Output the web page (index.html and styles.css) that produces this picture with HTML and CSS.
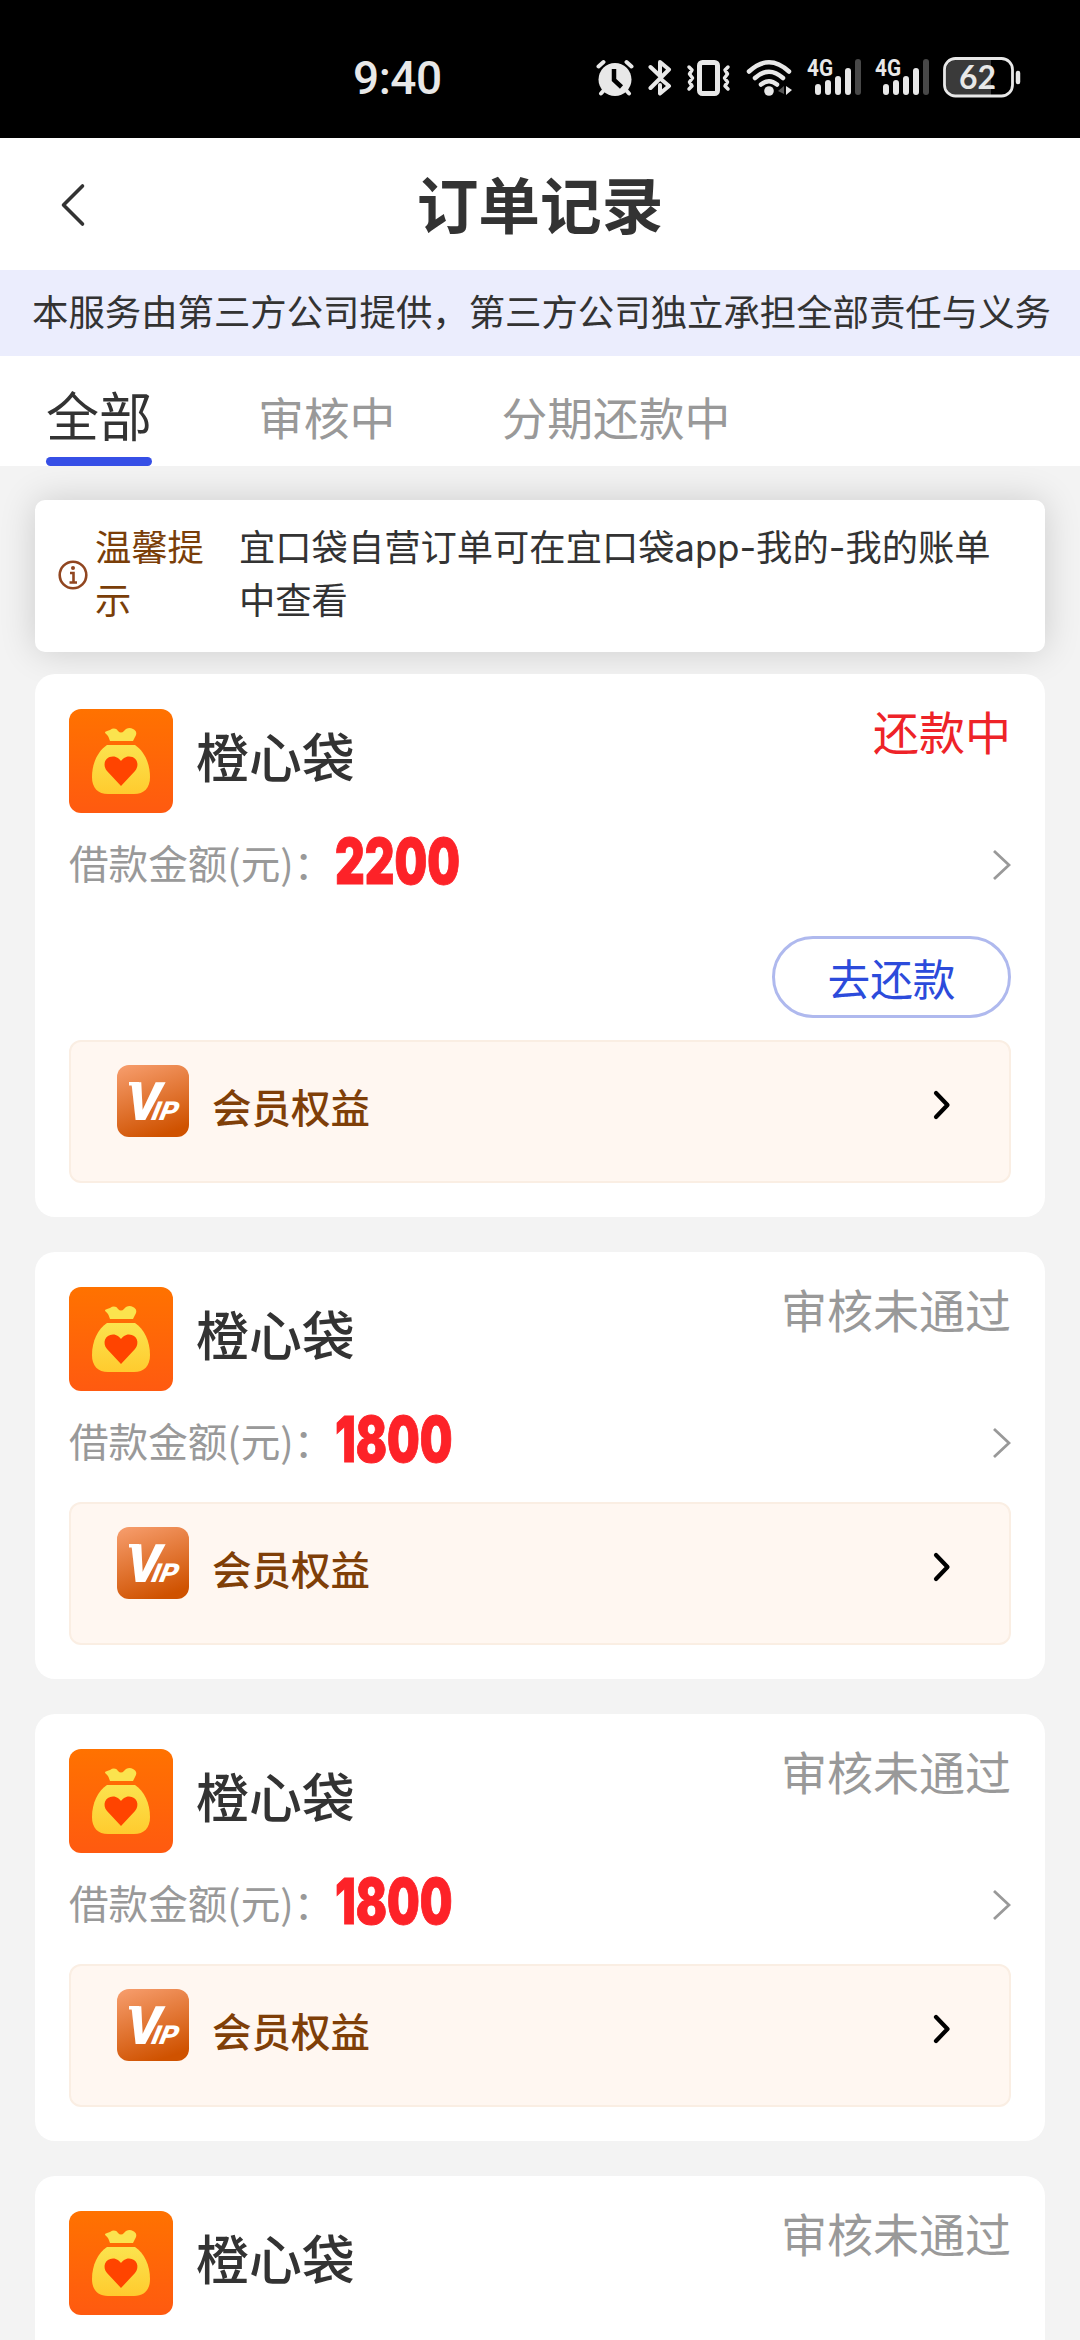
FILE: index.html
```html
<!DOCTYPE html>
<html lang="zh-CN">
<head>
<meta charset="utf-8">
<title>订单记录</title>
<link rel="stylesheet" href="styles.css">
</head>
<body>
<svg class="defs" width="0" height="0" aria-hidden="true">
  <defs>
    <linearGradient id="orange" x1="0" y1="0" x2="0" y2="1"><stop offset="0" stop-color="#ff7200"/><stop offset="1" stop-color="#ff5a10"/></linearGradient>
    <linearGradient id="gold" x1="0" y1="0" x2="0" y2="1"><stop offset="0" stop-color="#fbe34e"/><stop offset="1" stop-color="#ffcb2e"/></linearGradient>
    <linearGradient id="copper" x1="0.2" y1="0" x2="0.55" y2="1"><stop offset="0" stop-color="#f59a68"/><stop offset="1" stop-color="#cf5200"/></linearGradient>
    <symbol id="bag" viewBox="0 0 104 104">
      <rect width="104" height="104" rx="12" fill="url(#orange)"/>
      <path d="M36 23c1 -1 3 -1 5 -2c3 -2 6 -2 8 1c2 2 4 2 6 0c2 -3 6 -4 9 -2c4 2 4 5 2 8l-2 4H41l-1.500 -4c-1 -2.500 -3.500 -3 -3.500 -5z" fill="#fbe34e"/>
      <path d="M38 36H66C75 42 81 54 81 68C81 79 75 85 65 85H39C29 85 23 79 23 68C23 54 29 42 38 36Z" fill="url(#gold)"/>
      <path d="M52 77L38 62C33 56 36 47.500 44 47.500C48 47.500 50.500 50 52 52C53.500 50 56 47.500 60 47.500C68 47.500 71 56 66 62Z" fill="#ff4400"/>
    </symbol>
    <symbol id="vip" viewBox="0 0 72 72">
      <rect width="72" height="72" rx="12" fill="url(#copper)"/>
      <path d="M12 17H22V20.500H12Z" fill="#fff"/>
      <text class="vip-v" transform="translate(6.500 55) skewX(-12)" textLength="34" lengthAdjust="spacingAndGlyphs">V</text>
      <text class="vip-ip" transform="translate(32 55) skewX(-22)" textLength="26" lengthAdjust="spacingAndGlyphs">IP</text>
    </symbol>
    <symbol id="signal" viewBox="0 0 54 40">
      <text class="net" x="0" y="18" textLength="26" lengthAdjust="spacingAndGlyphs">4G</text>
      <path d="M11 29V34M21 25V34M31 21V34M41 13V34" stroke="#e8e8e8" stroke-width="6" stroke-linecap="round"/>
      <path d="M51 4V34" stroke="#484848" stroke-width="6" stroke-linecap="round"/>
    </symbol>
  </defs>
</svg>

<header class="status-bar">
  <span class="clock">9:40</span>
  <div class="status-icons">
    <svg class="i-alarm" viewBox="0 0 38 40" width="38" height="40"><circle cx="19" cy="21.500" r="16.500" fill="#e8e8e8"/><path d="M2.500 8.500L7.500 4M35.500 8.500L30.500 4M5 35.500L9 31M33 35.500L29 31" stroke="#e8e8e8" stroke-width="4" stroke-linecap="round"/><path d="M18 11V22L25.500 29" fill="none" stroke="#000" stroke-width="4.500"/></svg>
    <svg class="i-bt" viewBox="0 0 24 40" width="24" height="40"><path d="M2.500 9L12 18V4L21 11.500L2.500 30M14 22L21 28L12 35.500V27" fill="none" stroke="#e8e8e8" stroke-width="4" stroke-linecap="round" stroke-linejoin="round"/></svg>
    <svg class="i-vib" viewBox="0 0 46 40" width="46" height="40"><rect x="13.500" y="4.500" width="18" height="31" rx="3" fill="none" stroke="#e8e8e8" stroke-width="5"/><path d="M3 9L6 12L3.500 16L6.500 20L3.500 24L6 28L3 31M42 9L39 12L41.500 16L38.500 20L41.500 24L39 28L42 31" fill="none" stroke="#e8e8e8" stroke-width="3.500" stroke-linecap="round" stroke-linejoin="round"/></svg>
    <svg class="i-wifi" viewBox="0 0 48 40" width="48" height="40"><path d="M3 13.500Q23 -5 43 13.500M9 20Q23 7.500 37 20M15 26.500Q23 20 31 26.500" fill="none" stroke="#e8e8e8" stroke-width="4.500" stroke-linecap="round"/><circle cx="23" cy="33" r="4.800" fill="#e8e8e8"/><path d="M38 28V36L32 33Z" fill="#555"/><path d="M40 28L46 32L40 37Z" fill="#e8e8e8"/></svg>
    <svg class="i-sig" width="54" height="40"><use href="#signal"/></svg>
    <svg class="i-sig2" width="54" height="40"><use href="#signal"/></svg>
    <svg class="i-bat" viewBox="0 0 80 42" width="80" height="42"><path d="M13 3H48V38H13A10 10 0 0 1 3 28V13A10 10 0 0 1 13 3Z" fill="#3a3a3a"/><rect x="1.500" y="1.500" width="68" height="37.500" rx="11" fill="none" stroke="#e8e8e8" stroke-width="2.800"/><path d="M75 16V25" stroke="#e8e8e8" stroke-width="4.500" stroke-linecap="round"/><text class="bat-num" x="16" y="32" textLength="37" lengthAdjust="spacingAndGlyphs">62</text></svg>
  </div>
</header>

<nav class="nav-bar">
  <svg class="back" viewBox="0 0 30 48" width="30" height="48"><path d="M23.500 5L4.500 24L23.500 43" fill="none" stroke="#333" stroke-width="3.600" stroke-linecap="round" stroke-linejoin="round"/></svg>
  <h1 class="title">订单记录</h1>
</nav>
<p class="notice">本服务由第三方公司提供，第三方公司独立承担全部责任与义务</p>
<div class="tabs">
  <span class="tab active">全部</span>
  <span class="tab">审核中</span>
  <span class="tab">分期还款中</span>
</div>

<main class="list">
  <section class="tip">
    <svg class="info" viewBox="0 0 30 30" width="30" height="30"><circle cx="15" cy="15" r="13.300" fill="none" stroke="#914620" stroke-width="2.600"/><circle cx="15" cy="8" r="2" fill="#914620"/><path d="M12 13H15.500V22M11.500 22.500H19" fill="none" stroke="#914620" stroke-width="2.600"/></svg>
    <span class="tip-label">温馨提示</span>
    <p class="tip-text">宜口袋自营订单可在宜口袋app-我的-我的账单中查看</p>
  </section>

  <article class="card">
    <div class="head"><svg class="logo"><use href="#bag"/></svg><h2 class="name">橙心袋</h2><span class="state repaying">还款中</span></div>
    <div class="amount-row"><span class="label">借款金额(元)：</span><span class="amount">2200</span><svg class="more" viewBox="0 0 20 32" width="20" height="32"><path d="M3 2L18 16L3 30" fill="none" stroke="#999" stroke-width="2.800"/></svg></div>
    <div class="actions"><button class="repay">去还款</button></div>
    <div class="benefit"><svg class="vip"><use href="#vip"/></svg><span class="benefit-name">会员权益</span><svg class="go" viewBox="0 0 18 30" width="18" height="30"><path d="M3 3L14.500 15L3 27" fill="none" stroke="#000" stroke-width="4.200" stroke-linecap="round" stroke-linejoin="round"/></svg></div>
  </article>

  <article class="card">
    <div class="head"><svg class="logo"><use href="#bag"/></svg><h2 class="name">橙心袋</h2><span class="state">审核未通过</span></div>
    <div class="amount-row"><span class="label">借款金额(元)：</span><span class="amount">1800</span><svg class="more" viewBox="0 0 20 32" width="20" height="32"><path d="M3 2L18 16L3 30" fill="none" stroke="#999" stroke-width="2.800"/></svg></div>
    <div class="benefit"><svg class="vip"><use href="#vip"/></svg><span class="benefit-name">会员权益</span><svg class="go" viewBox="0 0 18 30" width="18" height="30"><path d="M3 3L14.500 15L3 27" fill="none" stroke="#000" stroke-width="4.200" stroke-linecap="round" stroke-linejoin="round"/></svg></div>
  </article>

  <article class="card">
    <div class="head"><svg class="logo"><use href="#bag"/></svg><h2 class="name">橙心袋</h2><span class="state">审核未通过</span></div>
    <div class="amount-row"><span class="label">借款金额(元)：</span><span class="amount">1800</span><svg class="more" viewBox="0 0 20 32" width="20" height="32"><path d="M3 2L18 16L3 30" fill="none" stroke="#999" stroke-width="2.800"/></svg></div>
    <div class="benefit"><svg class="vip"><use href="#vip"/></svg><span class="benefit-name">会员权益</span><svg class="go" viewBox="0 0 18 30" width="18" height="30"><path d="M3 3L14.500 15L3 27" fill="none" stroke="#000" stroke-width="4.200" stroke-linecap="round" stroke-linejoin="round"/></svg></div>
  </article>

  <article class="card last">
    <div class="head"><svg class="logo"><use href="#bag"/></svg><h2 class="name">橙心袋</h2><span class="state">审核未通过</span></div>
  </article>
</main>
</body>
</html>
```
FILE: styles.css
```css
* { box-sizing: border-box; }
body {
  margin: 0;
  width: 1080px;
  height: 2340px;
  overflow: hidden;
  display: flex;
  flex-direction: column;
  background: #f3f3f3;
  color: #333;
  font-family: "Noto Sans CJK SC", sans-serif;
}
h1, h2, p { margin: 0; }
svg { display: block; flex: none; }
svg.defs { height: 0; }

.status-bar {
  height: 138px;
  flex: none;
  background: #000;
  color: #e8e8e8;
  display: flex;
  align-items: center;
  padding: 18px 57px 0 353px;
}
.clock { font: 500 46px/60px Roboto, sans-serif; letter-spacing: -0.5px; width: 244px; }
.status-icons { display: flex; align-items: center; }
.i-bt, .i-vib, .i-wifi, .i-sig2, .i-bat { margin-left: 14px; }
.i-sig { margin-left: 13px; }
.net { font: 700 23px Roboto, sans-serif; fill: #e8e8e8; }
.bat-num { font: 700 33px Lato, sans-serif; fill: #e8e8e8; }

.nav-bar {
  height: 132px;
  flex: none;
  background: #fff;
  display: grid;
  grid-template-columns: 60px 1fr 60px;
  align-items: center;
}
.back { margin-left: 59px; margin-top: 1px; }
.title { text-align: center; font-size: 61.700px; line-height: 80px; font-weight: 700; margin-top: -4px; }
.notice {
  height: 86px;
  flex: none;
  background: #ebedfd;
  padding-left: 32px;
  font-size: 36.400px;
  line-height: 80px;
  white-space: nowrap;
}
.tabs {
  height: 110px;
  flex: none;
  background: #fff;
  display: flex;
  padding: 0 46px;
  gap: 106px;
}
.tab { font-size: 45.800px; line-height: 120px; color: #999; white-space: nowrap; }
.tab.active { font-size: 53px; line-height: 116px; color: #333; display: flex; flex-direction: column; }
.tab.active::after { content: ""; height: 9px; border-radius: 5px; background: #364fe6; margin-top: -15px; }

.list { padding: 34px 35px 0; display: flex; flex-direction: column; }
.tip {
  height: 152px;
  flex: none;
  background: #fff;
  border-radius: 10px;
  box-shadow: 0 0 36px rgba(0, 0, 0, .16);
  display: flex;
  padding-left: 23px;
  padding-top: 19px;
  font-size: 36.300px;
  line-height: 53px;
}
.info { margin-top: 41px; }
.tip-label { width: 112px; margin-left: 7px; color: #7a3e08; }
.tip-text { width: 768px; margin-left: 32px; margin-top: 3px; font-family: Inter, "Noto Sans CJK SC", sans-serif; }

.card {
  background: #fff;
  border-radius: 20px;
  margin-top: 22px;
  padding: 35px 34px 34px;
  height: 427px;
  flex: none;
}
.card:nth-of-type(1) { height: 543px; }
.card + .card { margin-top: 35px; }
.card.last { height: 164px; padding-bottom: 0; border-radius: 20px 20px 0 0; }
.head { display: flex; height: 103px; }
.logo { width: 104px; height: 104px; }
.name { margin-left: 23px; font-size: 52.900px; font-weight: 500; line-height: 92px; }
.state { margin-left: auto; font-size: 46px; line-height: 43px; color: #999; }
.state.repaying { color: #ee2328; }
.amount-row { display: flex; align-items: center; height: 78px; margin-top: 12px; }
.label { font-size: 39.600px; line-height: 74px; color: #999; width: 266px; white-space: nowrap; margin-top: -2px; }
.amount { font: 900 63px/74px Inter, sans-serif; color: #fd2228; margin-top: -4px; transform: scaleX(.73); transform-origin: 0 50%; -webkit-text-stroke: 1px #fd2228; }
.more { margin-left: auto; margin-top: 3px; }
.actions { display: flex; justify-content: flex-end; height: 116px; padding-top: 34px; }
.repay {
  width: 239px;
  height: 82px;
  flex: none;
  border: 3px solid #afb9ee;
  border-radius: 41px;
  background: #fff;
  color: #2c4bdb;
  font: 400 42.700px/76px "Noto Sans CJK SC", sans-serif;
  padding: 0;
}
.benefit {
  height: 143px;
  margin-top: 22px;
  border: 2px solid #faeee3;
  border-radius: 12px;
  background: #fff7f1;
  display: flex;
  padding: 23px 58px 0 46px;
}
.vip { width: 72px; height: 72px; }
.vip-v { font: 900 53px Roboto, sans-serif; fill: #fff; }
.vip-ip { font: 900 26px Roboto, sans-serif; fill: #fff; }
.benefit-name { margin-left: 23px; font-size: 39.500px; line-height: 82px; font-weight: 500; color: #7f3f08; }
.go { margin-left: auto; margin-top: 25px; }
```
